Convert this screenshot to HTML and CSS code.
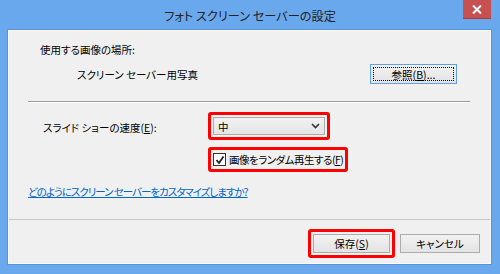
FILE: index.html
```html
<!DOCTYPE html>
<html lang="ja">
<head>
    <meta charset="UTF-8">
    <title>フォト スクリーン セーバーの設定</title>
    <link rel="stylesheet" href="styles.css">
</head>
<body>
    <div class="window">
        <div class="titlebar">
            <span></span>
            <h1>フォト スクリーン セーバーの設定</h1>
            <button class="close" type="button">
                <svg width="10" height="9" viewBox="0 0 10 9"><path d="M1 0.5 L9 8.5 M9 0.5 L1 8.5" stroke="#fff" stroke-width="2"/></svg>
            </button>
        </div>
        <div class="content">
            <div class="main">
                <p class="label">使用する画像の場所:</p>
                <div class="folder-row">
                    <span class="folder">スクリーン セーバー用写真</span>
                    <button class="btn browse" type="button"><span class="focus">参照(<u>B</u>)...</span></button>
                </div>
                <hr class="sep">
                <div class="speed-row">
                    <span class="speed-label">スライド ショーの速度(<u>E</u>):</span>
                    <div class="mark">
                        <div class="select">
                            <span>中</span>
                            <svg width="9" height="6" viewBox="0 0 9 6"><path d="M1 1 L4.5 4.5 L8 1" fill="none" stroke="#333" stroke-width="1.6"/></svg>
                        </div>
                    </div>
                </div>
                <div class="check-row">
                    <div class="mark">
                        <label class="check">
                            <span class="box">
                                <svg width="10" height="10" viewBox="0 0 10 10"><path d="M1.5 5 L4 8 L8.5 1.5" fill="none" stroke="#222" stroke-width="1.8"/></svg>
                            </span>
                            <span class="check-text">画像をランダム再生する(<u>F</u>)</span>
                        </label>
                    </div>
                </div>
                <a class="help" href="#">どのようにスクリーン セーバーをカスタマイズしますか?</a>
            </div>
            <div class="footer">
                <div class="mark">
                    <button class="btn" type="button">保存(<u>S</u>)</button>
                </div>
                <button class="btn cancel" type="button">キャンセル</button>
            </div>
        </div>
    </div>
</body>
</html>
```

FILE: styles.css
```css
* {
    box-sizing: border-box;
}
body {
    margin: 0;
    width: 500px;
    height: 274px;
    overflow: hidden;
    background: #6aa8ee;
    font-family: "Noto Sans CJK JP", "Noto Sans", sans-serif;
    font-feature-settings: "palt";
    font-size: 10.5px;
    color: #000;
}
.window {
    display: flex;
    flex-direction: column;
    height: 274px;
}
.titlebar {
    height: 30px;
    display: grid;
    grid-template-columns: 1fr auto 1fr;
    align-items: start;
}
.titlebar h1 {
    margin: 8px 0 0;
    font-size: 12.2px;
    font-weight: normal;
    color: #222;
    line-height: 16px;
}
.close {
    justify-self: end;
    margin-right: 9px;
    width: 28px;
    height: 19px;
    padding: 0;
    border: none;
    border-bottom: 1px solid #b03a3a;
    background: #c75050;
    display: flex;
    align-items: center;
    justify-content: center;
}
.content {
    flex: 1;
    margin: 0 9px 10px 8px;
    background: #f0f0f0;
    border: 1px solid #fafafa;
    outline: 1px solid #5a94d8;
    display: flex;
    flex-direction: column;
}
.main {
    flex: 1;
    padding: 11px 20px 0 19px;
}
.label {
    margin: 0 0 0 12px;
    line-height: 16px;
}
.folder-row {
    margin-top: 6px;
    display: flex;
    align-items: center;
    height: 20px;
}
.folder {
    margin-left: 49px;
    flex: 1;
}
.btn {
    font-family: inherit;
    font-feature-settings: "palt";
    font-size: 10.5px;
    color: #000;
    height: 20px;
    padding: 0;
    border: 1px solid #acacac;
    background: linear-gradient(#f2f2f2, #e3e3e3);
}
.browse {
    width: 87px;
    margin-right: 13px;
    border-color: #5ca0ea;
    padding: 2px;
    display: flex;
}
.browse .focus {
    flex: 1;
    border: 1px dotted #000;
    line-height: 13px;
}
.sep {
    margin: 17px 0 0;
    border: none;
    border-top: 1px solid #999;
    border-bottom: 1px solid #fff;
    height: 2px;
}
.speed-row {
    margin-top: 9px;
    display: flex;
    align-items: center;
}
.speed-label {
    width: 165px;
    margin-left: 15px;
    padding-top: 3px;
}
.mark {
    border: 3px solid #f00;
    border-radius: 3px;
    padding: 2px;
    display: inline-flex;
}
.select {
    width: 112px;
    height: 18px;
    border: 1px solid #acacac;
    background: linear-gradient(#f2f2f2, #e5e5e5);
    display: flex;
    align-items: center;
    justify-content: space-between;
    padding: 0 4px 0 4px;
}
.check-row {
    margin-top: 7px;
    padding-left: 180px;
}
.check {
    display: flex;
    align-items: center;
    gap: 3px;
    height: 15px;
}
.check-text {
    letter-spacing: -0.5px;
}
.box {
    width: 13px;
    height: 13px;
    border: 1px solid #333;
    background: #fff;
    display: flex;
    align-items: center;
    justify-content: center;
}
.help {
    display: block;
    margin-top: 12px;
    line-height: 16px;
    color: #0066cc;
    letter-spacing: -1px;
    text-decoration: underline;
}
.footer {
    height: 44px;
    border-top: 1px solid #c8c8c8;
    display: flex;
    justify-content: flex-end;
    align-items: center;
    gap: 5px;
    padding: 4px 10px 0 0;
}
.footer .btn {
    width: 77px;
    height: 19px;
}
.footer .cancel {
    width: 80px;
}
```
